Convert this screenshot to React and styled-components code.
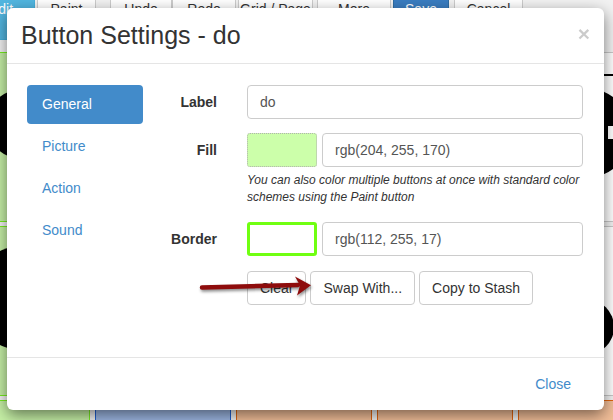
import React from "react";
import styled, { createGlobalStyle } from "styled-components";

const GlobalStyle = createGlobalStyle`
  html, body {
    margin: 0;
    padding: 0;
    background: #f2f2f2;
  }
  body {
    font-family: "Liberation Sans", Arial, Helvetica, sans-serif;
    font-size: 14px;
    color: #333;
  }
`;

const TONES = {
  green: { bg: "#c6f0a6", border: "#78f020" },
  blue: { bg: "#9db7e3", border: "#1f5fd0" },
  orange: { bg: "#f2be98", border: "#e2650e" },
  white: { bg: "#ffffff", border: "#c8c8c8" }
};

const tools = [
  { label: "Edit", kind: "edit", w: 65, ml: -30 },
  { label: "Paint", w: 59, ml: 2 },
  { label: "Undo", w: 62, ml: 14 },
  { label: "Redo", w: 64, ml: 0 },
  { label: "Grid / Page", w: 75, ml: 2 },
  { label: "More", w: 74, ml: 4 },
  { label: "Save", kind: "primary", w: 56, ml: 2 },
  { label: "Cancel", w: 69, ml: 5 }
];

// icon shapes drawn in tile coordinates (136 x 170)
const tiles = [
  { tone: "green", shape: <circle cx="68" cy="72" r="35" /> },
  { tone: "white" },
  { tone: "white" },
  { tone: "white" },
  {
    tone: "white",
    shape: (
      <>
        <rect x="40" y="22" width="96" height="2" />
        <circle cx="68" cy="81" r="45" />
        <rect x="90" y="74" width="8" height="13" fill="#fff" />
      </>
    )
  },
  { tone: "green", shape: <circle cx="68" cy="72" r="52" /> },
  { tone: "white" },
  { tone: "white" },
  { tone: "white" },
  { tone: "white", shape: <circle cx="68" cy="101" r="28" /> },
  { tone: "green" },
  { tone: "blue" },
  { tone: "orange" },
  { tone: "orange" },
  { tone: "orange" }
];

const navItems = ["General", "Picture", "Action", "Sound"];

const App = () => {
  return (
    <Page>
      <GlobalStyle />
      <Toolbar>
        {tools.map(t => (
          <ToolButton key={t.label} $kind={t.kind} $w={t.w} $ml={t.ml}>
            {t.label}
          </ToolButton>
        ))}
      </Toolbar>
      <TileGrid>
        {tiles.map((t, i) => (
          <Tile key={i} $tone={t.tone}>
            {t.shape && (
              <TileIcon viewBox="0 0 136 170">
                <g fill="#000">{t.shape}</g>
              </TileIcon>
            )}
          </Tile>
        ))}
      </TileGrid>

      <Dialog>
        <Header>
          <Title>Button Settings - do</Title>
          <CloseX>×</CloseX>
        </Header>
        <Body>
          <Nav>
            {navItems.map((item, i) => (
              <NavPill key={item} $active={i === 0}>
                {item}
              </NavPill>
            ))}
          </Nav>
          <Form>
            <FormRow>
              <FieldLabel>Label</FieldLabel>
              <Controls>
                <TextInput defaultValue="do" />
              </Controls>
            </FormRow>
            <FormRow $gap={14}>
              <FieldLabel>Fill</FieldLabel>
              <Controls>
                <ColorRow>
                  <Swatch $fill="rgb(204, 255, 170)" />
                  <TextInput defaultValue="rgb(204, 255, 170)" />
                </ColorRow>
                <Help>
                  You can also color multiple buttons at once with standard
                  color schemes using the Paint button
                </Help>
              </Controls>
            </FormRow>
            <FormRow $gap={16}>
              <FieldLabel>Border</FieldLabel>
              <Controls>
                <ColorRow>
                  <Swatch $outline="rgb(112, 255, 17)" />
                  <TextInput defaultValue="rgb(112, 255, 17)" />
                </ColorRow>
              </Controls>
            </FormRow>
            <FormRow $gap={15}>
              <FieldLabel />
              <Controls>
                <ButtonRow>
                  <Button>Clear</Button>
                  <Button>Swap With...</Button>
                  <Button>Copy to Stash</Button>
                </ButtonRow>
              </Controls>
            </FormRow>
          </Form>
          <Arrow viewBox="0 0 130 40">
            <line
              x1="12"
              y1="18.5"
              x2="108"
              y2="16"
              stroke="#8e0c0c"
              strokeWidth="4.5"
              strokeLinecap="round"
            />
            <path d="M105 7.5 L121 16.2 L107 26.5 L110 16.5 Z" fill="#8e0c0c" />
          </Arrow>
        </Body>
        <Footer>
          <LinkButton>Close</LinkButton>
        </Footer>
      </Dialog>
    </Page>
  );
};

const Page = styled.div`
  position: relative;
  display: flex;
  flex-direction: column;
  width: 613px;
  height: 420px;
  overflow: hidden;
`;

const Toolbar = styled.div`
  display: flex;
  align-items: flex-start;
  margin-top: -8px;
  height: 48px;
  flex: none;
`;

const ToolButton = styled.div`
  box-sizing: border-box;
  flex: none;
  width: ${({ $w }) => $w}px;
  margin-left: ${({ $ml }) => $ml}px;
  height: ${({ $kind }) => ($kind === "edit" ? 48 : 34)}px;
  padding: 6px 0;
  line-height: 20px;
  text-align: ${({ $kind }) => ($kind === "edit" ? "left" : "center")};
  padding-left: ${({ $kind }) => ($kind === "edit" ? "18px" : "0")};
  border: 1px solid
    ${({ $kind }) =>
      $kind === "primary" ? "#2e6da4" : $kind === "edit" ? "#46b0dc" : "#ccc"};
  background: ${({ $kind }) =>
    $kind === "primary" ? "#3a7dc1" : $kind === "edit" ? "#52b6e0" : "#fff"};
  color: ${({ $kind }) => ($kind ? "#fff" : "#333")};
  font-size: 14px;
`;

const TileGrid = styled.div`
  display: grid;
  grid-template-columns: repeat(5, 136px);
  grid-auto-rows: 170px;
  column-gap: 5px;
  row-gap: 4px;
  margin-top: 12px;
  margin-left: -46px;
`;

const Tile = styled.div`
  box-sizing: border-box;
  position: relative;
  border: 1px solid ${({ $tone }) => TONES[$tone].border};
  background: ${({ $tone }) => TONES[$tone].bg};
  border-radius: 2px;
  overflow: hidden;
`;

const TileIcon = styled.svg`
  display: block;
  width: 136px;
  height: 170px;
  margin: -1px;
`;

const Dialog = styled.div`
  position: absolute;
  left: 7px;
  top: 8px;
  width: 597px;
  height: 402px;
  box-sizing: border-box;
  display: flex;
  flex-direction: column;
  background: #fff;
  border-radius: 6px;
  box-shadow: 0 5px 15px rgba(0, 0, 0, 0.5);
`;

const Header = styled.div`
  display: flex;
  justify-content: space-between;
  align-items: flex-start;
  height: 56px;
  box-sizing: border-box;
  padding: 14px 14px 15px 14px;
  border-bottom: 1px solid #e5e5e5;
  flex: none;
`;

const Title = styled.h4`
  margin: 0;
  font-size: 25px;
  line-height: 27px;
  font-weight: 400;
  color: #333;
`;

const CloseX = styled.span`
  margin-top: 1px;
  font-size: 21px;
  line-height: 21px;
  font-weight: bold;
  color: #000;
  opacity: 0.2;
`;

const Body = styled.div`
  position: relative;
  display: flex;
  flex: 1;
  padding: 21px 21px 0 20px;
`;

const Nav = styled.div`
  width: 116px;
  flex: none;
  display: flex;
  flex-direction: column;
  gap: 3px;
`;

const NavPill = styled.div`
  padding: 10px 15px;
  line-height: 19px;
  border-radius: 4px;
  background: ${({ $active }) => ($active ? "#428bca" : "transparent")};
  color: ${({ $active }) => ($active ? "#fff" : "#428bca")};
`;

const Form = styled.div`
  flex: 1;
  padding-top: 0;
`;

const FormRow = styled.div`
  display: flex;
  margin-top: ${({ $gap }) => $gap || 0}px;
`;

const FieldLabel = styled.label`
  width: 74px;
  flex: none;
  text-align: right;
  font-weight: bold;
  line-height: 34px;
`;

const Controls = styled.div`
  flex: 1;
  min-width: 0;
  margin-left: 30px;
`;

const ColorRow = styled.div`
  display: flex;
  gap: 5px;
`;

const Swatch = styled.div`
  width: 70px;
  height: 34px;
  flex: none;
  box-sizing: border-box;
  border-radius: 3px;
  background: ${({ $fill }) => $fill || "#fff"};
  border: ${({ $outline }) =>
    $outline ? `3px solid ${$outline}` : "1px dotted #b0b0b0"};
`;

const TextInput = styled.input`
  display: block;
  width: 100%;
  height: 34px;
  box-sizing: border-box;
  padding: 6px 12px;
  border: 1px solid #ccc;
  border-radius: 4px;
  font-family: inherit;
  font-size: 14px;
  color: #555;
  background: #fff;
  outline: none;
`;

const Help = styled.p`
  margin: 5px 0 0;
  font-size: 12px;
  line-height: 17px;
  font-style: italic;
  color: #333;
`;

const ButtonRow = styled.div`
  display: flex;
  gap: 4px;
`;

const Button = styled.button`
  height: 34px;
  padding: 6px 12px;
  line-height: 20px;
  border: 1px solid #ccc;
  border-radius: 4px;
  background: #fff;
  color: #333;
  font-family: inherit;
  font-size: 14px;
`;

const Arrow = styled.svg`
  position: absolute;
  left: 183px;
  top: 205px;
  width: 130px;
  height: 40px;
  overflow: visible;
  filter: drop-shadow(1px 2px 1.5px rgba(0, 0, 0, 0.45));
`;

const Footer = styled.div`
  display: flex;
  justify-content: flex-end;
  flex: none;
  height: 52px;
  box-sizing: content-box;
  padding: 0 20px;
  align-items: center;
  border-top: 1px solid #e5e5e5;
`;

const LinkButton = styled.button`
  height: 34px;
  padding: 6px 12px;
  line-height: 20px;
  border: 1px solid transparent;
  background: none;
  color: #428bca;
  font-family: inherit;
  font-size: 14px;
`;

export default App;
